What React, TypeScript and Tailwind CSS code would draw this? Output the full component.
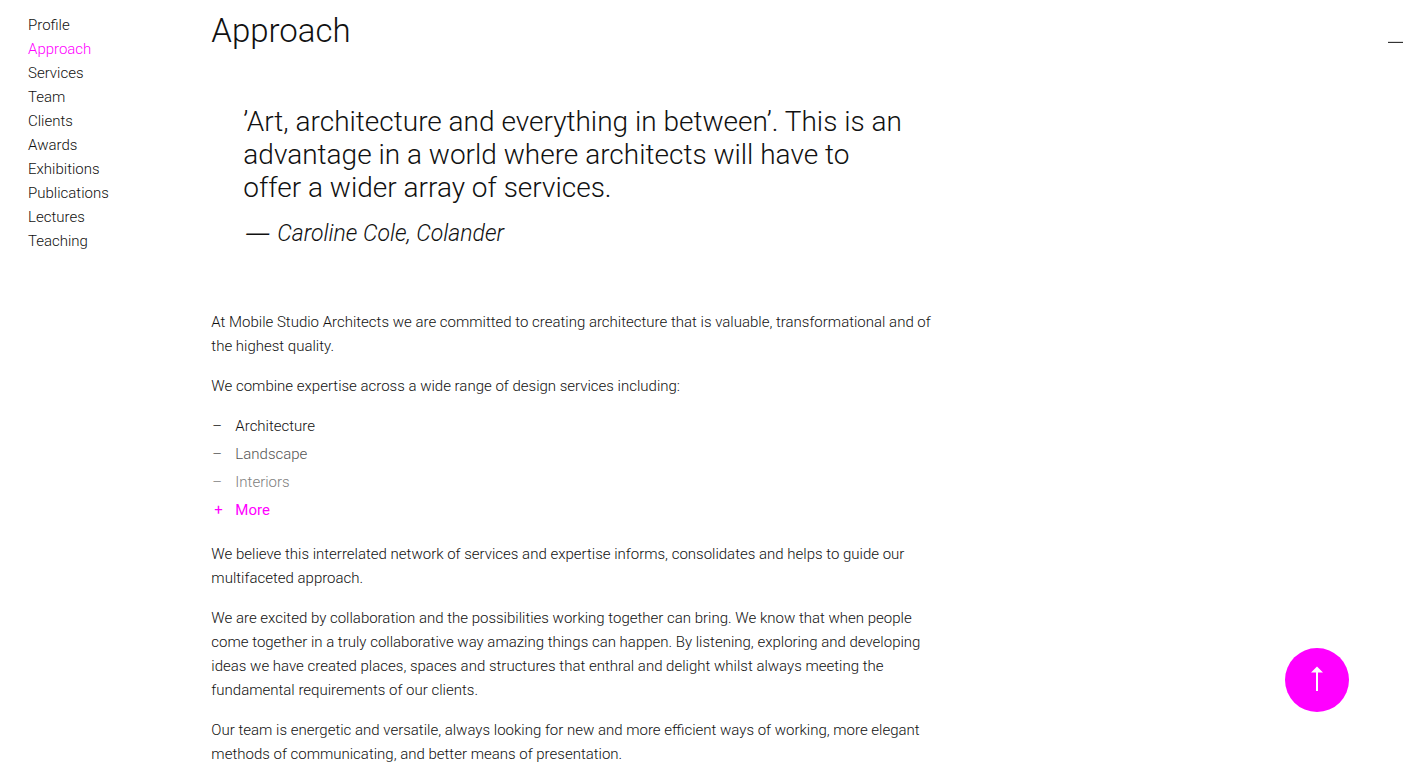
interface NavLink {
  label: string
  href: string
}

const NAV_LINKS: NavLink[] = [
  { label: 'Profile', href: '#profile' },
  { label: 'Approach', href: '#approach' },
  { label: 'Services', href: '#services' },
  { label: 'Team', href: '#team' },
  { label: 'Clients', href: '#clients' },
  { label: 'Awards', href: '#awards' },
  { label: 'Exhibitions', href: '#exhibitions' },
  { label: 'Publications', href: '#publications' },
  { label: 'Lectures', href: '#lectures' },
  { label: 'Teaching', href: '#teaching' },
]

const SERVICES = [
  { label: 'Architecture', tone: 'text-[#111]' },
  { label: 'Landscape', tone: 'text-[#555]' },
  { label: 'Interiors', tone: 'text-[#808080]' },
]

function SideNav({ active }: { active: string }) {
  return (
    <nav className="w-[15%] shrink-0 pt-[13px] pl-7">
      <ul>
        {NAV_LINKS.map((link) => (
          <li key={link.label}>
            <a href={link.href} className={`block ${link.label === active ? 'text-[#f0f]' : ''}`}>
              {link.label}
            </a>
          </li>
        ))}
      </ul>
    </nav>
  )
}

function ServiceList() {
  return (
    <ul className="flex flex-col gap-1 pb-1">
      {SERVICES.map((service) => (
        <li key={service.label} className={`flex ${service.tone}`}>
          <span className="w-6 pl-px">–</span>
          {service.label}
        </li>
      ))}
      <li>
        <button type="button" className="flex cursor-pointer font-normal text-[#f0f]">
          <span className="w-6 pl-[3px] text-left">+</span>
          More
        </button>
      </li>
    </ul>
  )
}

function BackToTop() {
  return (
    <a
      href="#approach"
      aria-label="Back to top"
      className="fixed right-[60px] bottom-[59px] flex size-16 items-center justify-center rounded-full bg-[#f0f]"
    >
      <svg width="14" height="28" viewBox="0 0 14 28" fill="#fff">
        <path d="M7 0.5 L13 6.5 H8 V25 H6 V6.5 H1 Z" />
      </svg>
    </a>
  )
}

export default function App() {
  return (
    <div className="flex bg-white font-['Roboto','Liberation_Sans',sans-serif] text-[15px] leading-6 font-light text-[#111]">
      <SideNav active="Approach" />
      <main id="approach" className="min-w-0 flex-1 pb-1">
        <header className="flex justify-between pt-[11px] pr-[6px]">
          <h1 className="text-[33px] leading-10">Approach</h1>
          <button type="button" aria-label="Collapse section" className="flex h-10 cursor-pointer items-center pt-[22px]">
            <svg width="15" height="2" viewBox="0 0 15 2">
              <path d="M0 0.5H15" stroke="#ddd" />
              <path d="M0 1.5H15" stroke="#333" />
            </svg>
          </button>
        </header>

        <div className="max-w-[736px]">
          <blockquote className="mt-[54px] mr-10 ml-8 text-[28px] leading-[33px]">
            <p>
              ’Art, architecture and everything in between’. This is an advantage in a world where architects will have to
              offer a wider array of services.
            </p>
            <footer className="mt-3 text-[23px] leading-9">
              <cite className="flex gap-2">
                <span className="pl-[3px] font-['Liberation_Sans',sans-serif] leading-8">—</span>
                Caroline Cole, Colander
              </cite>
            </footer>
          </blockquote>

          <div className="mt-[58px] space-y-4">
            <p>
              At Mobile Studio Architects we are committed to creating architecture that is valuable, transformational and
              of the highest quality.
            </p>
            <p>We combine expertise across a wide range of design services including:</p>
            <ServiceList />
            <p>
              We believe this interrelated network of services and expertise informs, consolidates and helps to guide our
              multifaceted approach.
            </p>
            <p>
              We are excited by collaboration and the possibilities working together can bring. We know that when people
              come together in a truly collaborative way amazing things can happen. By listening, exploring and developing
              ideas we have created places, spaces and structures that enthral and delight whilst always meeting the
              fundamental requirements of our clients.
            </p>
            <p>
              Our team is energetic and versatile, always looking for new and more efficient ways of working, more elegant
              methods of communicating, and better means of presentation.
            </p>
          </div>
        </div>
      </main>
      <BackToTop />
    </div>
  )
}
